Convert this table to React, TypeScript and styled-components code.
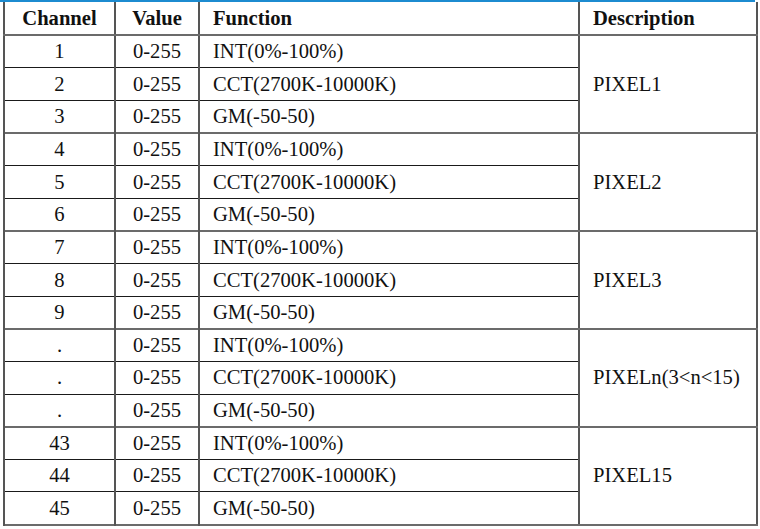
import React from 'react';
import styled, { createGlobalStyle } from 'styled-components';

const GlobalStyle = createGlobalStyle`
  html, body {
    margin: 0;
    padding: 0;
    background: #ffffff;
  }
  body {
    font-family: "Liberation Serif", "Times New Roman", serif;
    color: #111;
  }
`;

const Page = styled.div`
  width: 760px;
  height: 529px;
  overflow: hidden;
  background: #fff;
  font-family: "Liberation Serif", "Times New Roman", serif;
`;

const TopBar = styled.div`
  width: 755px;
  height: 2px;
  background: #1c8bd0;
`;

const Frame = styled.div`
  padding-left: 3px;
`;

const Table = styled.table`
  border-collapse: collapse;
  table-layout: fixed;
  width: 753px;
  font-family: "Liberation Serif", "Times New Roman", serif;
  font-size: 20.6px;
  line-height: 1;
  color: #111;
`;

const HeadCell = styled.th<{ $align?: 'left' | 'center' }>`
  height: 32px;
  padding: 0;
  padding-left: ${(p) => (p.$align === 'left' ? '13px' : '0')};
  text-align: ${(p) => p.$align || 'center'};
  font-family: "Liberation Serif", "Times New Roman", serif;
  font-weight: bold;
  border-left: 2px solid #555;
  border-right: 2px solid #555;
  border-bottom: 2px solid #6b6b6b;
  vertical-align: middle;
`;

const Row = styled.tr<{ $groupEnd?: boolean }>`
  height: 32.65px;
  border-bottom: ${(p) => (p.$groupEnd ? '2px solid #6b6b6b' : '1px solid #1a1a1a')};
`;

const Cell = styled.td<{ $align?: 'left' | 'center' }>`
  padding: 0;
  padding-left: ${(p) => (p.$align === 'left' ? '13px' : '0')};
  text-align: ${(p) => p.$align || 'center'};
  font-family: "Liberation Serif", "Times New Roman", serif;
  border-left: 2px solid #555;
  border-right: 2px solid #555;
  vertical-align: middle;
  white-space: nowrap;
`;

const DescCell = styled(Cell)`
  border-bottom: 2px solid #6b6b6b;
`;

const functions = ['INT(0%-100%)', 'CCT(2700K-10000K)', 'GM(-50-50)'];

const groups = [
  { channels: ['1', '2', '3'], desc: 'PIXEL1' },
  { channels: ['4', '5', '6'], desc: 'PIXEL2' },
  { channels: ['7', '8', '9'], desc: 'PIXEL3' },
  { channels: ['.', '.', '.'], desc: 'PIXELn(3<n<15)' },
  { channels: ['43', '44', '45'], desc: 'PIXEL15' },
];

const App: React.FC = () => {
  return (
    <Page>
      <GlobalStyle />
      <TopBar />
      <Frame>
        <Table>
          <colgroup>
            <col style={{ width: 111 }} />
            <col style={{ width: 84 }} />
            <col style={{ width: 380 }} />
            <col style={{ width: 178 }} />
          </colgroup>
          <thead>
            <tr>
              <HeadCell>Channel</HeadCell>
              <HeadCell>Value</HeadCell>
              <HeadCell $align="left">Function</HeadCell>
              <HeadCell $align="left">Description</HeadCell>
            </tr>
          </thead>
          <tbody>
            {groups.map((group) =>
              group.channels.map((ch, i) => (
                <Row key={group.desc + i} $groupEnd={i === 2}>
                  <Cell>{ch}</Cell>
                  <Cell>0-255</Cell>
                  <Cell $align="left">{functions[i]}</Cell>
                  {i === 0 && (
                    <DescCell $align="left" rowSpan={3}>
                      {group.desc}
                    </DescCell>
                  )}
                </Row>
              ))
            )}
          </tbody>
        </Table>
      </Frame>
    </Page>
  );
};

export default App;
